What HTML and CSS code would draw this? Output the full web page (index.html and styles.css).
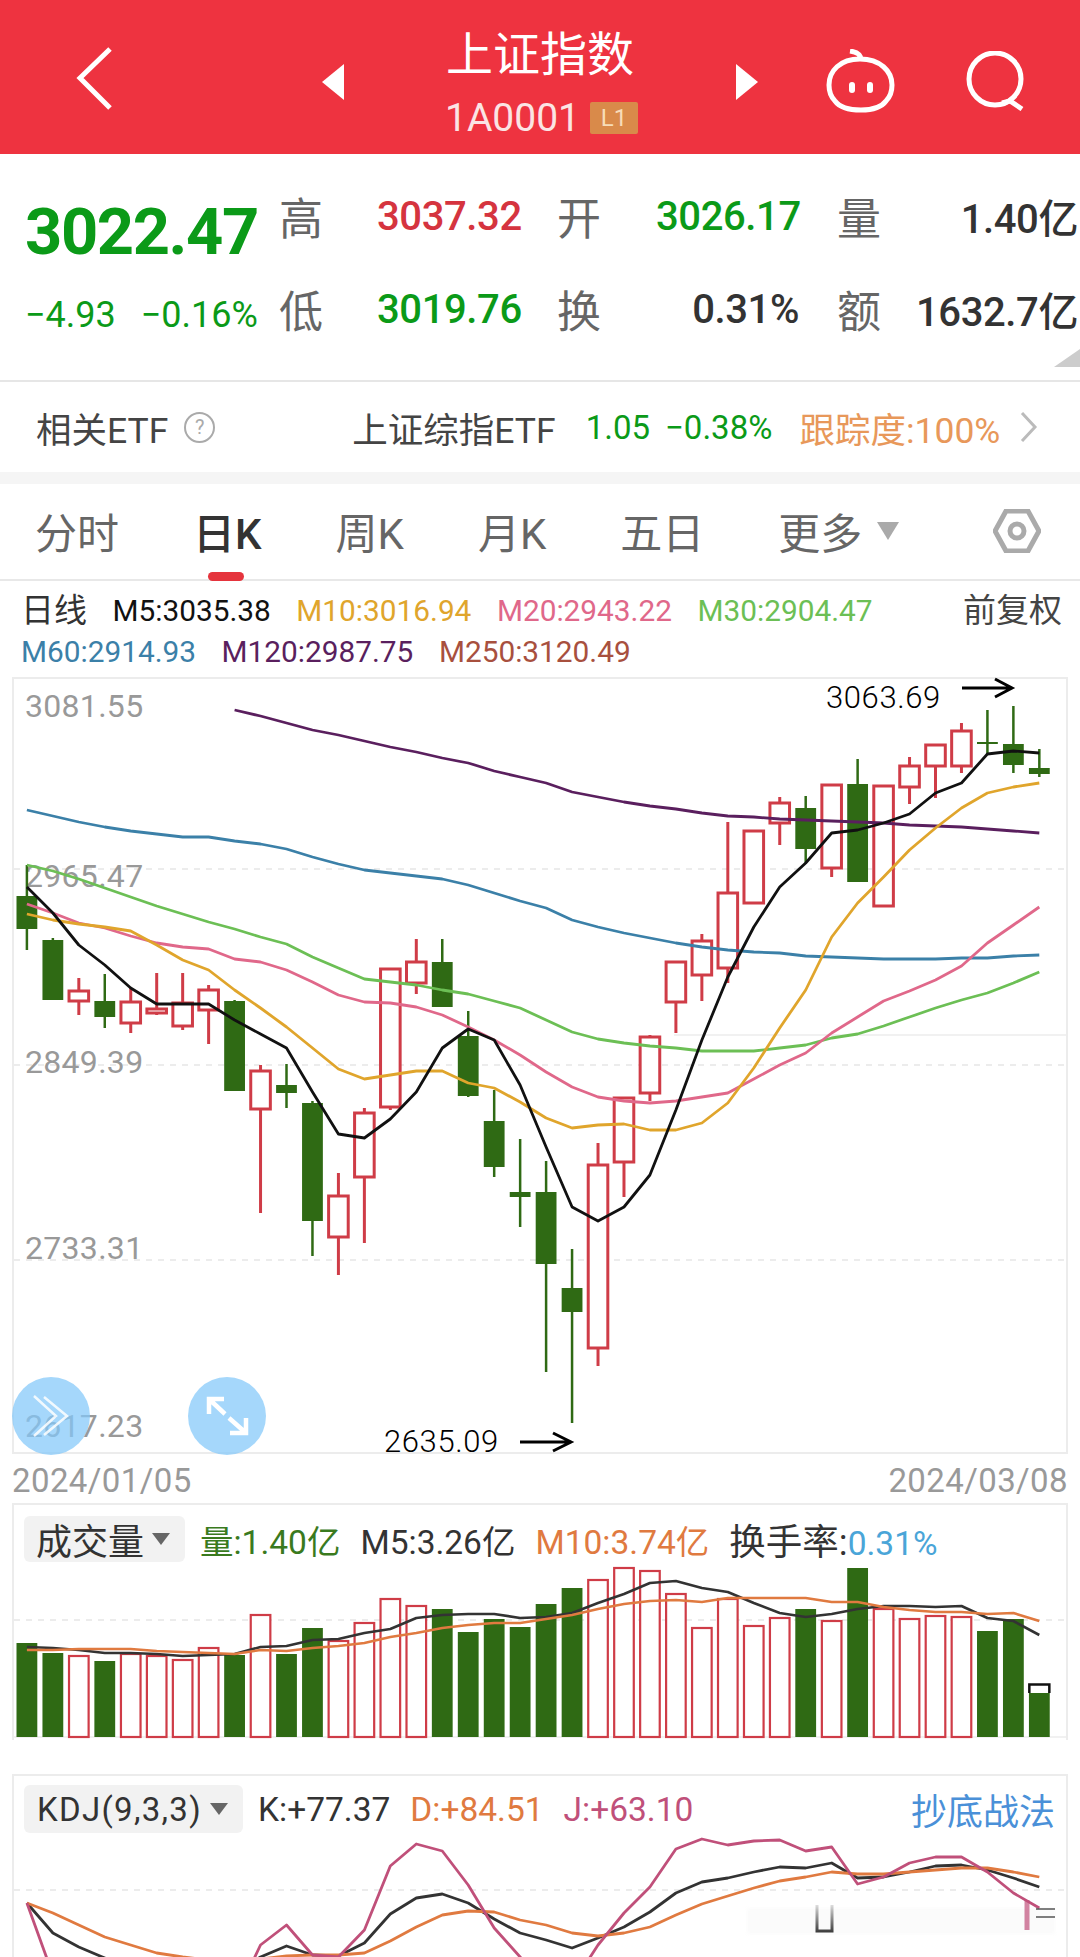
FILE: index.html
```html
<!DOCTYPE html>
<html lang="zh-CN">
<head>
  <meta charset="UTF-8">
  <title>上证指数</title>
  <link rel="stylesheet" href="styles.css">
</head>
<body>
  <!-- 顶部标题栏 -->
  <header class="top-bar">
    <svg class="icon-back" viewBox="0 0 40 64"><path d="M36 2 L6 31 L36 61"/></svg>
    <svg class="icon-tri" viewBox="0 0 22 36"><path d="M22 0 V36 L0 18 Z"/></svg>
    <div class="title-box">
      <div class="title">上证指数</div>
      <div class="sub-title"><span>1A0001</span><span class="badge">L1</span></div>
    </div>
    <svg class="icon-tri" viewBox="0 0 22 36"><path d="M0 0 V36 L22 18 Z"/></svg>
    <svg class="icon-robot" viewBox="0 0 69 64">
      <path class="line" d="M35 11 C35 5 31 3 24 2 M34 10 C14 10 3 22 3 36 C3 43 5 48 9 52 C14 59 24 61 35 61 C46 61 55 59 60 52 C64 48 66 43 66 36 C66 22 54 10 34 10 Z"/>
      <rect x="23" y="33" width="6" height="11" rx="3"/>
      <rect x="41" y="33" width="6" height="11" rx="3"/>
    </svg>
    <svg class="icon-search" viewBox="0 0 60 60"><circle cx="29" cy="28" r="26"/><path d="M36 52 L44 50 L56 58"/></svg>
  </header>

  <!-- 行情数据 -->
  <section class="quote">
    <div class="quote-main">
      <div class="price">3022.47</div>
      <div class="change"><span>−4.93</span><span>−0.16%</span></div>
    </div>
    <div class="quote-grid">
      <span class="q-label">高</span><span class="q-val red">3037.32</span>
      <span class="q-label">开</span><span class="q-val green">3026.17</span>
      <span class="q-label">量</span><span class="q-val dark right">1.40亿</span>
      <span class="q-label">低</span><span class="q-val green">3019.76</span>
      <span class="q-label">换</span><span class="q-val dark mid">0.31%</span>
      <span class="q-label">额</span><span class="q-val dark right">1632.7亿</span>
    </div>
    <svg class="corner" viewBox="0 0 26 18"><path d="M26 0 V18 H0 Z"/></svg>
  </section>

  <div class="etf-row">
    <span>相关ETF</span>
    <span class="help">?</span>
    <span class="etf-name">上证综指ETF</span>
    <span class="green etf-num">1.05</span>
    <span class="green etf-num">−0.38%</span>
    <span class="etf-track">跟踪度:100%</span>
    <svg class="etf-arrow" viewBox="0 0 18 30"><path d="M2 1 L15 15 L2 29"/></svg>
  </div>
  <div class="band"></div>

  <!-- 周期切换 -->
  <nav class="tabs">
    <span class="tab">分时</span>
    <span class="tab active">日K</span>
    <span class="tab">周K</span>
    <span class="tab">月K</span>
    <span class="tab">五日</span>
    <span class="tab more">更多<svg class="tri-down" viewBox="0 0 22 18"><path d="M0 0 H22 L11 18 Z"/></svg></span>
    <svg class="icon-hex" viewBox="0 0 48 44"><path d="M13 2 H35 L46 22 L35 42 H13 L2 22 Z"/><circle cx="24" cy="22" r="7"/></svg>
  </nav>

  <div class="ma-legend">
    <div class="ma-row">
      <span class="ma-name">日线</span>
      <span class="c-m5">M5:3035.38</span>
      <span class="c-m10">M10:3016.94</span>
      <span class="c-m20">M20:2943.22</span>
      <span class="c-m30">M30:2904.47</span>
      <span class="ma-right">前复权</span>
    </div>
    <div class="ma-row">
      <span class="c-m60">M60:2914.93</span>
      <span class="c-m120">M120:2987.75</span>
      <span class="c-m250">M250:3120.49</span>
    </div>
  </div>

  <!-- K线图 -->
  <div class="pane kline">
    <svg class="chart" width="1052" height="773" viewBox="14 679 1052 773">
      <g class="grid">
        <line x1="14" x2="1066" y1="869" y2="869"/>
        <line x1="14" x2="1066" y1="1065" y2="1065"/>
        <line x1="14" x2="1066" y1="1260" y2="1260"/>
      </g>
      <line class="grid-solid" x1="674" x2="1066" y1="1035" y2="1035"/>
      <g class="axis">
        <text x="25" y="717">3081.55</text>
        <text x="25" y="887">2965.47</text>
        <text x="25" y="1073">2849.39</text>
        <text x="25" y="1259">2733.31</text>
        <text x="25" y="1437">2617.23</text>
      </g>
      <g id="candles"></g>
      <g id="maLines"></g>
      <text class="note" x="826" y="708">3063.69</text>
      <path class="note-arrow" d="M962 688 H1012 M995 679 L1012 688 L995 697"/>
      <text class="note" x="384" y="1452">2635.09</text>
      <path class="note-arrow" d="M520 1442 H571 M553 1433 L571 1442 L553 1451"/>
    </svg>
    <div class="float-btn btn-left">
      <svg class="btn-chevron" viewBox="0 0 78 78"><path d="M22 19 L44 39 L22 59 M32 20 L55 39 L32 58"/></svg>
    </div>
    <div class="float-btn btn-right">
      <svg class="btn-expand" viewBox="0 0 78 78"><path d="M37 37 L21 22 M36 22 H21 V37 M41 41 L58 56 M58 41 V56 H42"/></svg>
    </div>
  </div>

  <div class="date-row"><span>2024/01/05</span><span>2024/03/08</span></div>

  <!-- 成交量 -->
  <div class="pane vol">
    <div class="pane-head">
      <span class="chip">成交量<svg class="tri-chip" viewBox="0 0 18 12"><path d="M0 0 H18 L9 12 Z"/></svg></span>
      <span class="c-vol">量:1.40亿</span>
      <span class="c-dark">M5:3.26亿</span>
      <span class="c-orange">M10:3.74亿</span>
      <span class="c-dark"><span class="cjk">换手率:</span><span class="c-blue">0.31%</span></span>
    </div>
    <svg class="chart" width="1052" height="178" viewBox="14 1562 1052 178">
      <line class="grid-d" x1="14" x2="1066" y1="1620" y2="1620"/>
      <line class="grid-solid" x1="14" x2="1066" y1="1737" y2="1737"/>
      <g id="volBars"></g>
      <g id="volLines"></g>
    </svg>
  </div>

  <!-- KDJ -->
  <div class="pane kdj">
    <div class="pane-head">
      <span class="chip chip-kdj">KDJ(9,3,3)<svg class="tri-chip" viewBox="0 0 18 12"><path d="M0 0 H18 L9 12 Z"/></svg></span>
      <span class="c-dark">K:+77.37</span>
      <span class="c-orange">D:+84.51</span>
      <span class="c-j">J:+63.10</span>
      <span class="kdj-link">抄底战法</span>
    </div>
    <svg class="chart" width="1052" height="124" viewBox="14 1833 1052 124">
      <defs>
        <filter id="soft"><feGaussianBlur stdDeviation="1.5"/></filter>
        <linearGradient id="fadeUp" gradientUnits="userSpaceOnUse" x1="0" y1="1903" x2="0" y2="1933">
          <stop offset="0" stop-color="#222" stop-opacity="0.1"/>
          <stop offset="1" stop-color="#222" stop-opacity="0.9"/>
        </linearGradient>
      </defs>
      <line class="grid-d" x1="14" x2="1066" y1="1890" y2="1890"/>
      <g id="kdjLines"></g>
      <!-- 水印 -->
      <g class="wm">
        <rect class="wm-bg" x="747" y="1908" width="308" height="26" filter="url(#soft)"/>
        <path class="wm-u" d="M817 1905 V1931 H832 V1905" stroke="url(#fadeUp)"/>
        <path class="wm-j" d="M1027 1900 V1930"/>
        <path class="wm-dash" d="M1036 1909 H1055 M1036 1917 H1055"/>
      </g>
    </svg>
  </div>

  <script src="script.js"></script>
</body>
</html>
```

FILE: styles.css
```css
* {
  box-sizing: border-box;
}
html, body {
  margin: 0;
  height: 1957px;
  overflow: hidden;
}
body {
  font-family: Roboto, "Noto Sans CJK SC", sans-serif;
  background: #fff;
  color: #333;
}
.green { color: #0b9a18; }
.red { color: #d5343f; }
.dark { color: #333; }

/* top bar */
.top-bar {
  display: flex;
  align-items: flex-start;
  height: 154px;
  background: #ee3340;
  color: #fff;
}
.top-bar svg {
  flex: none;
}
.icon-back {
  width: 40px;
  height: 64px;
  margin: 47px 0 0 74px;
  fill: none;
  stroke: #fff;
  stroke-width: 5;
}
.icon-tri {
  width: 22px;
  height: 36px;
  margin: 64px 0 0 208px;
  fill: #fff;
}
.title-box + .icon-tri {
  margin-left: 0;
}
.title-box {
  width: 392px;
  text-align: center;
}
.title {
  margin-top: 30px;
  font-size: 47px;
  line-height: 50px;
}
.sub-title {
  display: flex;
  justify-content: center;
  align-items: center;
  gap: 10px;
  margin-top: 22px;
  padding-left: 3px;
  font-size: 39px;
  line-height: 32px;
  color: #fbe4e4;
}
.badge {
  width: 48px;
  height: 32px;
  background: #d98a4a;
  color: #f7dcb8;
  font-size: 24px;
  line-height: 32px;
  border-radius: 2px;
}
.icon-robot {
  width: 69px;
  height: 64px;
  margin: 49px 0 0 68px;
  fill: #fff;
}
.icon-robot .line {
  fill: none;
  stroke: #fff;
  stroke-width: 5;
}
.icon-search {
  width: 60px;
  height: 60px;
  margin: 51px 0 0 71px;
  fill: none;
  stroke: #fff;
  stroke-width: 5;
}

/* quote */
.quote {
  position: relative;
  display: flex;
  height: 228px;
  border-bottom: 2px solid #e6e6e6;
}
.quote-main {
  width: 281px;
  padding-left: 25px;
}
.price {
  margin-top: 44px;
  font-size: 65px;
  line-height: 68px;
  font-weight: 700;
  letter-spacing: -1.4px;
  color: #0b9a18;
}
.change {
  display: flex;
  gap: 25px;
  margin-top: 29px;
  font-size: 36px;
  line-height: 40px;
  color: #0b9a18;
}
.quote-grid {
  flex: 1;
  display: grid;
  grid-template-columns: 96px 182px 97px 183px 60px 1fr;
  grid-auto-rows: 60px;
  row-gap: 33px;
  padding: 32px 2px 0 0;
  align-items: center;
}
.q-label {
  margin-left: -2px;
  font-size: 44px;
  color: #666;
}
.q-val {
  font-size: 40px;
  font-weight: 500;
  letter-spacing: -0.4px;
}
.q-val.mid {
  padding-right: 40px;
  text-align: right;
}
.q-val.right {
  text-align: right;
}
.corner {
  position: absolute;
  right: 0;
  bottom: 13px;
  width: 26px;
  height: 18px;
  fill: #ccc;
}

/* etf */
.etf-row {
  display: flex;
  align-items: center;
  height: 90px;
  padding-left: 36px;
  font-size: 35.5px;
  color: #444;
}
.help {
  width: 31px;
  height: 31px;
  margin-left: 16px;
  border: 2px solid #aaa;
  border-radius: 50%;
  color: #aaa;
  font-size: 20px;
  line-height: 27px;
  text-align: center;
}
.etf-name {
  margin-left: 137px;
}
.etf-num {
  margin-left: 30px;
  font-size: 33px;
}
.etf-num + .etf-num {
  margin-left: 15px;
}
.etf-track {
  margin-left: 27px;
  color: #e8985a;
}
.etf-arrow {
  width: 18px;
  height: 30px;
  margin-left: 20px;
  fill: none;
  stroke: #bbb;
  stroke-width: 3;
}
.band {
  height: 12px;
  background: #f5f5f5;
}

/* tabs */
.tabs {
  display: flex;
  align-items: center;
  gap: 74px;
  height: 97px;
  padding: 0 0 2px 35px;
  border-bottom: 2px solid #e8e8e8;
}
.tab {
  position: relative;
  font-size: 42px;
  color: #666;
}
.tab.active {
  color: #333;
  font-weight: 500;
}
.tab.active::after {
  content: "";
  position: absolute;
  left: 15px;
  bottom: -20px;
  width: 36px;
  height: 9px;
  background: #e5343d;
  border-radius: 5px;
}
.more {
  display: flex;
  align-items: center;
}
.tri-down {
  width: 22px;
  height: 18px;
  margin: 0 0 0 15px;
  fill: #aaa;
}
.icon-hex {
  width: 48px;
  height: 44px;
  margin-left: 20px;
  fill: none;
  stroke: #aaa;
  stroke-width: 5;
}

/* ma legend */
.ma-legend {
  height: 96px;
  padding: 10px 18px 0 21px;
  font-size: 29.8px;
  line-height: 40px;
}
.ma-row {
  display: flex;
  gap: 25.5px;
  height: 41px;
}
.ma-name {
  font-size: 33px;
}
.ma-right {
  margin-left: auto;
  color: #444;
  font-size: 33px;
}
.c-m5 { color: #111; }
.c-m10 { color: #e0a52c; }
.c-m20 { color: #e0688a; }
.c-m30 { color: #6cbf55; }
.c-m60 { color: #3b80a8; }
.c-m120 { color: #5a1f5e; }
.c-m250 { color: #a8503e; }

/* panes */
.pane {
  position: relative;
  width: 1056px;
  margin-left: 12px;
  border: 2px solid #ececec;
}
.chart {
  display: block;
  overflow: visible;
}
.kline {
  height: 777px;
}
.vol {
  height: 237px;
  border-bottom: none;
  margin-bottom: 34px;
}
.kdj {
  height: 183px;
  border-bottom: none;
}
.kdj .chart {
  overflow: hidden;
}
.grid line, .grid-d {
  stroke: #e6e6e6;
  stroke-width: 1.5;
  stroke-dasharray: 6 6;
}
.grid-solid {
  stroke: #ececec;
  stroke-width: 1.5;
}
.axis text {
  font-size: 32px;
  fill: #999;
  letter-spacing: 0.3px;
}
.note {
  font-size: 31px;
  font-weight: 300;
  fill: #000;
  letter-spacing: 0.6px;
}
.note-arrow {
  fill: none;
  stroke: #000;
  stroke-width: 3;
}
.float-btn {
  position: absolute;
  top: 698px;
  width: 78px;
  height: 78px;
  border-radius: 50%;
  background: rgba(130, 200, 250, 0.72);
}
.float-btn svg {
  display: block;
  fill: none;
  stroke: #fff;
}
.btn-left {
  left: -2px;
}
.btn-right {
  left: 174px;
}
.btn-chevron {
  stroke-width: 2.5;
  opacity: 0.85;
}
.btn-expand {
  stroke-width: 4.5;
}

.date-row {
  display: flex;
  justify-content: space-between;
  height: 49px;
  padding: 7px 12px 0;
  font-size: 33px;
  line-height: 40px;
  letter-spacing: 0.4px;
  color: #999;
}

/* sub charts */
.pane-head {
  display: flex;
  align-items: center;
  gap: 20px;
  height: 46px;
  margin-top: 11px;
  padding: 0 11px 0 10px;
  font-size: 33.5px;
  color: #333;
}
.kdj .pane-head {
  height: 48px;
  margin-top: 9px;
}
.chip {
  display: flex;
  align-items: center;
  flex: none;
  height: 46px;
  width: 161px;
  margin-right: -5px;
  padding-left: 12px;
  background: #f2f2f2;
  border-radius: 6px;
  font-size: 36px;
}
.chip-kdj {
  height: 48px;
  width: 219px;
  padding-left: 13px;
  font-size: 33px;
  letter-spacing: 1.3px;
}
.tri-chip {
  width: 18px;
  height: 12px;
  margin-left: 8px;
  fill: #666;
}
.cjk {
  font-size: 36.5px;
}
.c-vol { color: #3a7a1e; }
.c-dark { color: #333; }
.c-orange { color: #e07a40; }
.c-blue { color: #4aa5d8; }
.c-j { color: #c0507a; }
.kdj-link {
  margin-left: auto;
  font-size: 36px;
  color: #4a90d8;
}
.wm-bg {
  fill: #ccc;
  opacity: 0.07;
}
.wm-u {
  fill: none;
  stroke-width: 3;
}
.wm-j {
  fill: none;
  stroke: #c0507a;
  stroke-width: 5;
  opacity: 0.7;
}
.wm-dash {
  fill: none;
  stroke: #555;
  stroke-width: 1.5;
}
```

FILE: script.js
```js
// 蜡烛图位置
const xAt = (i) => 26.9 + 25.96 * i;
const RED = '#cf3c47';
const GREEN = '#2f6a14';

// [实体上, 实体下, 影线上, 影线下, 颜色]
const candles = [
  [896, 929, 865, 950, 'g'], [940, 1000, 938, 1000, 'g'], [991, 1001, 978, 1015, 'r'],
  [1001, 1017, 974, 1028, 'g'], [1002, 1023, 988, 1033, 'r'], [1009, 1013, 973, 1015, 'r'],
  [1003, 1026, 973, 1030, 'r'], [990, 1010, 985, 1044, 'r'], [1001, 1091, 1000, 1091, 'g'],
  [1071, 1109, 1065, 1213, 'r'], [1085, 1093, 1064, 1108, 'g'], [1103, 1221, 1101, 1256, 'g'],
  [1196, 1237, 1173, 1275, 'r'], [1113, 1177, 1108, 1243, 'r'], [969, 1107, 969, 1110, 'r'],
  [962, 983, 939, 994, 'r'], [962, 1007, 939, 1007, 'g'], [1036, 1096, 1011, 1097, 'g'],
  [1121, 1167, 1090, 1177, 'g'], [1192, 1197, 1139, 1227, 'g'], [1192, 1264, 1161, 1372, 'g'],
  [1288, 1312, 1249, 1423, 'g'], [1165, 1348, 1143, 1366, 'r'], [1098, 1162, 1098, 1197, 'r'],
  [1037, 1093, 1035, 1101, 'r'], [962, 1002, 962, 1033, 'r'], [941, 975, 934, 1001, 'r'],
  [893, 968, 822, 983, 'r'], [831, 903, 831, 903, 'r'], [803, 823, 797, 845, 'r'],
  [808, 849, 796, 863, 'g'], [785, 868, 785, 877, 'r'], [784, 882, 759, 882, 'g'],
  [786, 906, 786, 906, 'r'], [766, 787, 757, 804, 'r'], [745, 766, 745, 798, 'r'],
  [731, 766, 723, 773, 'r'], [742, 744, 710, 755, 'g'], [744, 765, 706, 773, 'g'],
  [768, 774, 749, 777, 'g'],
];

const maLines = [
  { color: '#6cbf55', ys: [865, 871, 879, 888, 897, 906, 914, 922, 929, 937, 944, 957, 968, 979, 982, 985, 990, 994, 1001, 1008, 1020, 1032, 1039, 1043, 1046, 1048, 1051, 1051, 1051, 1048, 1045, 1038, 1034, 1026, 1017, 1008, 1000, 993, 983, 972] },
  { color: '#3b80a8', ys: [810, 816, 822, 827, 831, 834, 837, 837, 841, 844, 849, 857, 864, 870, 873, 876, 879, 885, 893, 901, 908, 920, 927, 933, 938, 943, 947, 950, 952, 953, 956, 957, 958, 959, 959, 959, 958, 958, 956, 955] },
  { color: '#5a1f5e', start: 8, ys: [710, 716, 723, 730, 735, 741, 747, 752, 758, 763, 771, 777, 783, 792, 797, 802, 806, 809, 813, 816, 817, 819, 820, 821, 822, 823, 825, 826, 827, 829, 831, 833] },
  { color: '#e0688a', ys: [904, 913, 923, 928, 936, 943, 947, 949, 959, 962, 970, 982, 995, 1002, 1003, 1007, 1015, 1027, 1040, 1055, 1072, 1087, 1097, 1101, 1103, 1101, 1097, 1093, 1079, 1065, 1053, 1033, 1017, 1001, 991, 980, 966, 943, 925, 907] },
  { color: '#e0a52c', ys: [914, 920, 924, 927, 931, 945, 960, 970, 990, 1008, 1027, 1048, 1069, 1079, 1075, 1071, 1071, 1083, 1088, 1102, 1118, 1128, 1125, 1124, 1130, 1130, 1123, 1103, 1068, 1028, 990, 937, 903, 877, 850, 828, 808, 793, 787, 783] },
  { color: '#111', ys: [887, 913, 945, 965, 988, 1004, 1004, 1004, 1020, 1034, 1048, 1092, 1134, 1138, 1119, 1092, 1048, 1029, 1040, 1085, 1147, 1207, 1221, 1207, 1175, 1110, 1040, 977, 927, 887, 863, 833, 830, 823, 814, 793, 783, 754, 751, 753] },
];

// 成交量顶部
const volTops = [1643, 1653, 1656, 1661, 1654, 1656, 1660, 1648, 1655, 1615, 1654, 1628, 1641, 1623, 1599, 1606, 1609, 1632, 1619, 1627, 1604, 1588, 1580, 1568, 1571, 1594, 1628, 1599, 1626, 1618, 1609, 1621, 1568, 1609, 1619, 1616, 1617, 1631, 1619, 1693];

const volLines = [
  { color: '#333', ys: [1647, 1648, 1650, 1653, 1653, 1654, 1656, 1655, 1654, 1647, 1646, 1640, 1639, 1633, 1629, 1618, 1615, 1614, 1614, 1618, 1617, 1613, 1603, 1594, 1583, 1581, 1588, 1592, 1603, 1613, 1617, 1614, 1609, 1606, 1606, 1607, 1606, 1618, 1621, 1635] },
  { color: '#e07a40', ys: [1650, 1650, 1649, 1649, 1649, 1651, 1652, 1653, 1654, 1650, 1651, 1648, 1646, 1643, 1637, 1633, 1628, 1625, 1623, 1623, 1619, 1615, 1609, 1604, 1601, 1600, 1602, 1598, 1598, 1598, 1598, 1602, 1602, 1607, 1610, 1612, 1612, 1614, 1613, 1621] },
];

const kdjLines = [
  { color: '#333', ys: [1903, 1933, 1947, 1958, 1970, 1980, 1983, 1983, 1973, 1957, 1946, 1955, 1956, 1943, 1914, 1898, 1894, 1903, 1919, 1933, 1940, 1948, 1938, 1927, 1912, 1893, 1882, 1878, 1872, 1867, 1868, 1863, 1878, 1877, 1872, 1866, 1865, 1870, 1878, 1887] },
  { color: '#e07a40', ys: [1903, 1913, 1925, 1937, 1945, 1953, 1957, 1960, 1962, 1959, 1956, 1955, 1955, 1953, 1941, 1927, 1915, 1911, 1912, 1920, 1925, 1933, 1936, 1933, 1927, 1915, 1904, 1896, 1888, 1881, 1877, 1872, 1874, 1874, 1872, 1870, 1868, 1868, 1872, 1877] },
  { color: '#c0507a', ys: [1903, 1975, 2000, 2000, 2000, 2000, 2000, 2000, 2000, 1945, 1925, 1955, 1957, 1930, 1866, 1844, 1851, 1885, 1928, 1957, 1985, 1985, 1945, 1913, 1887, 1849, 1839, 1845, 1841, 1840, 1851, 1847, 1884, 1877, 1863, 1857, 1857, 1872, 1893, 1908] },
];

function polyline(line, width) {
  const start = line.start || 0;
  const pts = line.ys.map((y, i) => `${xAt(i + start).toFixed(1)},${y}`).join(' ');
  return `<polyline points="${pts}" fill="none" stroke="${line.color}" stroke-width="${width}" stroke-linejoin="round"/>`;
}

function candleSvg(c, i) {
  const [top, bottom, high, low, kind] = c;
  const x = xAt(i);
  const color = kind === 'r' ? RED : GREEN;
  const wick = `<line x1="${x}" x2="${x}" y1="${high}" y2="${low}" stroke="${color}" stroke-width="${kind === 'r' ? 3 : 2.5}"/>`;
  if (kind === 'g') {
    return wick + `<rect x="${x - 10.4}" y="${top}" width="20.8" height="${bottom - top}" fill="${color}"/>`;
  }
  return wick + `<rect x="${x - 9.8}" y="${top}" width="19.6" height="${bottom - top}" fill="#fff" stroke="${color}" stroke-width="3"/>`;
}

function volSvg(top, i) {
  const x = xAt(i);
  const base = 1737;
  if (candles[i][4] === 'g') {
    return `<rect x="${x - 10.4}" y="${top}" width="20.8" height="${base - top}" fill="${GREEN}"/>`;
  }
  return `<rect x="${x - 9.8}" y="${top}" width="19.6" height="${base - top}" fill="#fff" stroke="${RED}" stroke-width="2.2"/>`;
}

document.getElementById('candles').innerHTML = candles.map(candleSvg).join('');
document.getElementById('maLines').innerHTML = maLines.map((l) => polyline(l, 2.8)).join('');
document.getElementById('volBars').innerHTML = volTops.map(volSvg).join('')
  + `<path d="M${xAt(39) - 10} 1693 V1684.5 H${xAt(39) + 10} V1693" fill="none" stroke="#111" stroke-width="2.5"/>`;
document.getElementById('volLines').innerHTML = volLines.map((l) => polyline(l, 2.6)).join('');
document.getElementById('kdjLines').innerHTML = kdjLines.map((l) => polyline(l, 2.8)).join('');
```
